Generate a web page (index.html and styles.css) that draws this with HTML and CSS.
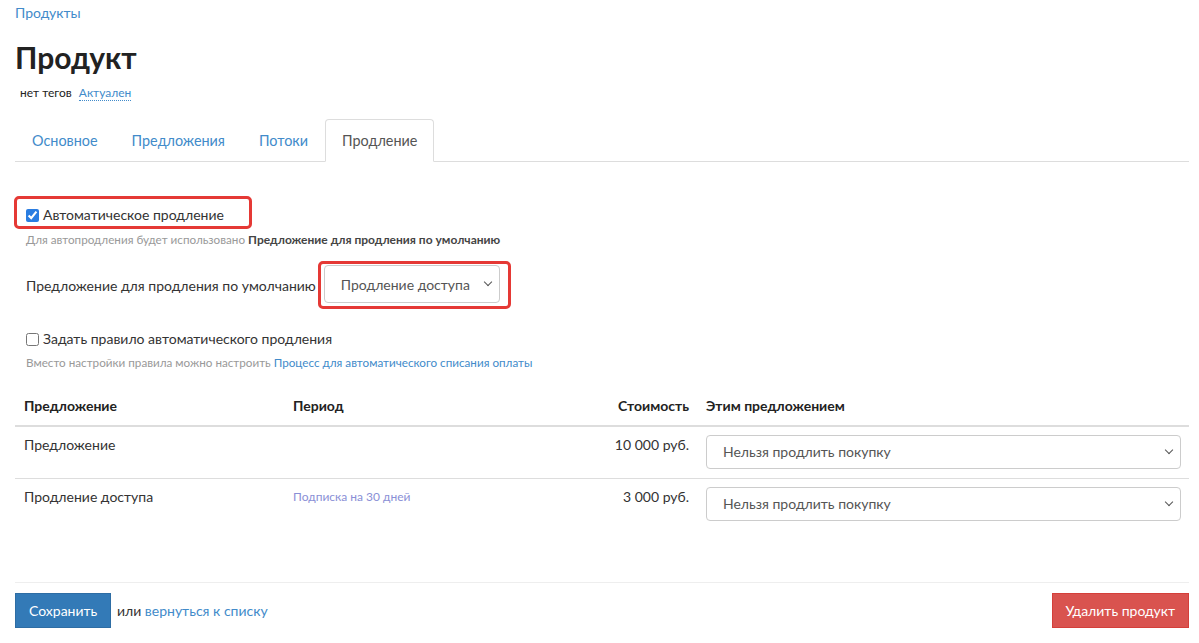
FILE: index.html
```html
<!DOCTYPE html>
<html lang="ru">
<head>
  <meta charset="UTF-8">
  <title>Продукт</title>
  <link rel="stylesheet" href="styles.css">
</head>
<body>
  <div class="page">
    <div class="breadcrumb"><a href="#">Продукты</a></div>
    <h1>Продукт</h1>
    <div class="tags">нет тегов <a href="#" class="status">Актуален</a></div>

    <ul class="tabs">
      <li><a href="#">Основное</a></li>
      <li><a href="#">Предложения</a></li>
      <li><a href="#">Потоки</a></li>
      <li class="active"><a href="#">Продление</a></li>
    </ul>

    <div class="tab-content">
      <div class="highlight check-box">
        <label class="check"><input type="checkbox" checked> Автоматическое продление</label>
      </div>
      <div class="hint first">Для автопродления будет использовано <b>Предложение для продления по умолчанию</b></div>

      <div class="field-row">
        <span class="field-label">Предложение для продления по умолчанию</span>
        <div class="highlight select-box">
          <div class="select small-select">Продление доступа <span class="chevron"></span></div>
        </div>
      </div>

      <label class="check rule"><input type="checkbox"> Задать правило автоматического продления</label>
      <div class="hint">Вместо настройки правила можно настроить <a href="#">Процесс для автоматического списания оплаты</a></div>

      <table class="offers">
        <thead>
          <tr>
            <th class="col-name">Предложение</th>
            <th class="col-period">Период</th>
            <th class="col-price">Стоимость</th>
            <th class="col-action">Этим предложением</th>
          </tr>
        </thead>
        <tbody>
          <tr>
            <td>Предложение</td>
            <td></td>
            <td class="col-price">10 000 руб.</td>
            <td class="col-action"><div class="select">Нельзя продлить покупку <span class="chevron"></span></div></td>
          </tr>
          <tr>
            <td>Продление доступа</td>
            <td class="period">Подписка на 30 дней</td>
            <td class="col-price">3 000 руб.</td>
            <td class="col-action"><div class="select">Нельзя продлить покупку <span class="chevron"></span></div></td>
          </tr>
        </tbody>
      </table>
    </div>

    <div class="actions">
      <div>
        <button class="btn btn-primary">Сохранить</button>
        <span class="or">или <a href="#">вернуться к списку</a></span>
      </div>
      <button class="btn btn-danger">Удалить продукт</button>
    </div>
  </div>
</body>
</html>
```

FILE: styles.css
```css
body {
  margin: 0;
  font-family: Lato, "Open Sans", sans-serif;
  font-size: 14px;
  color: #333;
  background: #fff;
}

a {
  color: #428bca;
  text-decoration: none;
}

.page {
  padding: 0 10px 0 15px;
}

.breadcrumb {
  padding-top: 4px;
  font-size: 14px;
  line-height: 17px;
}

h1 {
  margin: 18px 0 0;
  font-size: 30px;
  line-height: 36px;
  font-weight: 700;
  color: #222;
}

.tags {
  margin: 10px 0 0 5px;
  font-size: 12px;
  line-height: 16px;
  color: #222;
}

.tags .status {
  margin-left: 4px;
  border-bottom: 1px dotted #428bca;
}

.tabs {
  display: flex;
  list-style: none;
  margin: 18px 0 0;
  padding: 0;
  border-bottom: 1px solid #ddd;
}

.tabs li {
  margin-bottom: -1px;
}

.tabs a {
  display: block;
  padding: 0 16px;
  height: 41px;
  line-height: 41px;
  font-size: 14.4px;
  border: 1px solid transparent;
  border-radius: 4px 4px 0 0;
}

.tabs .active a {
  color: #555;
  border-color: #ddd;
  border-bottom-color: #fff;
  background: #fff;
}

.tab-content {
  padding-top: 34px;
}

.highlight {
  border: 3px solid #e53935;
  border-radius: 5px;
}

.check-box {
  display: inline-block;
  padding: 6px 25px 1px 9px;
  margin-left: -1px;
}

.check {
  font-size: 14px;
  line-height: 20px;
  display: flex;
  align-items: center;
}

.check input {
  margin: 0 4px 0 0;
  width: 13px;
  height: 13px;
  accent-color: #2a7de1;
}

.hint {
  margin: 3px 0 0 11px;
  font-size: 11.7px;
  line-height: 14px;
  color: #999;
}

.hint b {
  font-size: 12px;
  color: #444;
}

.field-row {
  display: flex;
  align-items: center;
  margin: 14px 0 0 11px;
}

.field-label {
  font-size: 14px;
  margin-right: 2px;
}

.select-box {
  padding: 1px 8px 3px 3px;
}

.select {
  display: flex;
  align-items: center;
  justify-content: space-between;
  box-sizing: border-box;
  height: 34px;
  padding: 0 8px 0 16px;
  border: 1px solid #ccc;
  border-radius: 4px;
  font-size: 14px;
  color: #555;
  background: #fff;
}

.small-select {
  width: 176px;
  height: 38px;
}

.chevron {
  width: 5px;
  height: 5px;
  border-right: 1px solid #555;
  border-bottom: 1px solid #555;
  transform: rotate(45deg);
  margin-top: -4px;
}

.rule {
  margin: 20px 0 0 11px;
}

.rule + .hint {
  margin-top: 6px;
}

.offers {
  width: 100%;
  margin-top: 19px;
  border-collapse: collapse;
  table-layout: fixed;
}

.offers th {
  text-align: left;
  font-size: 14px;
  line-height: 20px;
  font-weight: 700;
  color: #222;
  padding: 8px 9px 9px;
  border-bottom: 2px solid #ddd;
}

.offers td {
  vertical-align: top;
  padding: 8px 9px 9px;
  font-size: 14px;
  line-height: 20px;
  border-bottom: 1px solid #ddd;
}

.offers tbody tr:last-child td {
  border-bottom: none;
}

.offers .col-name {
  width: 251px;
}

.offers .col-period {
  width: 276px;
}

.offers .col-price {
  text-align: right;
  width: 102px;
  padding-right: 8px;
}

.offers .col-action {
  padding-right: 8px;
}

.offers .period {
  font-size: 12px;
  color: #8a8fd6;
}

.actions {
  display: flex;
  justify-content: space-between;
  align-items: center;
  margin-top: 52px;
  padding-top: 10px;
  border-top: 1px solid #eee;
}

.btn {
  border: 1px solid transparent;
  border-radius: 0;
  height: 35px;
  padding: 0 13px;
  font-family: inherit;
  font-size: 14px;
  color: #fff;
  cursor: pointer;
}

.btn-primary {
  background: #337ab7;
  border-color: #2e6da4;
}

.btn-danger {
  background: #d9534f;
  border-color: #d43f3a;
}

.or {
  margin-left: 2px;
  font-size: 14px;
}
```
